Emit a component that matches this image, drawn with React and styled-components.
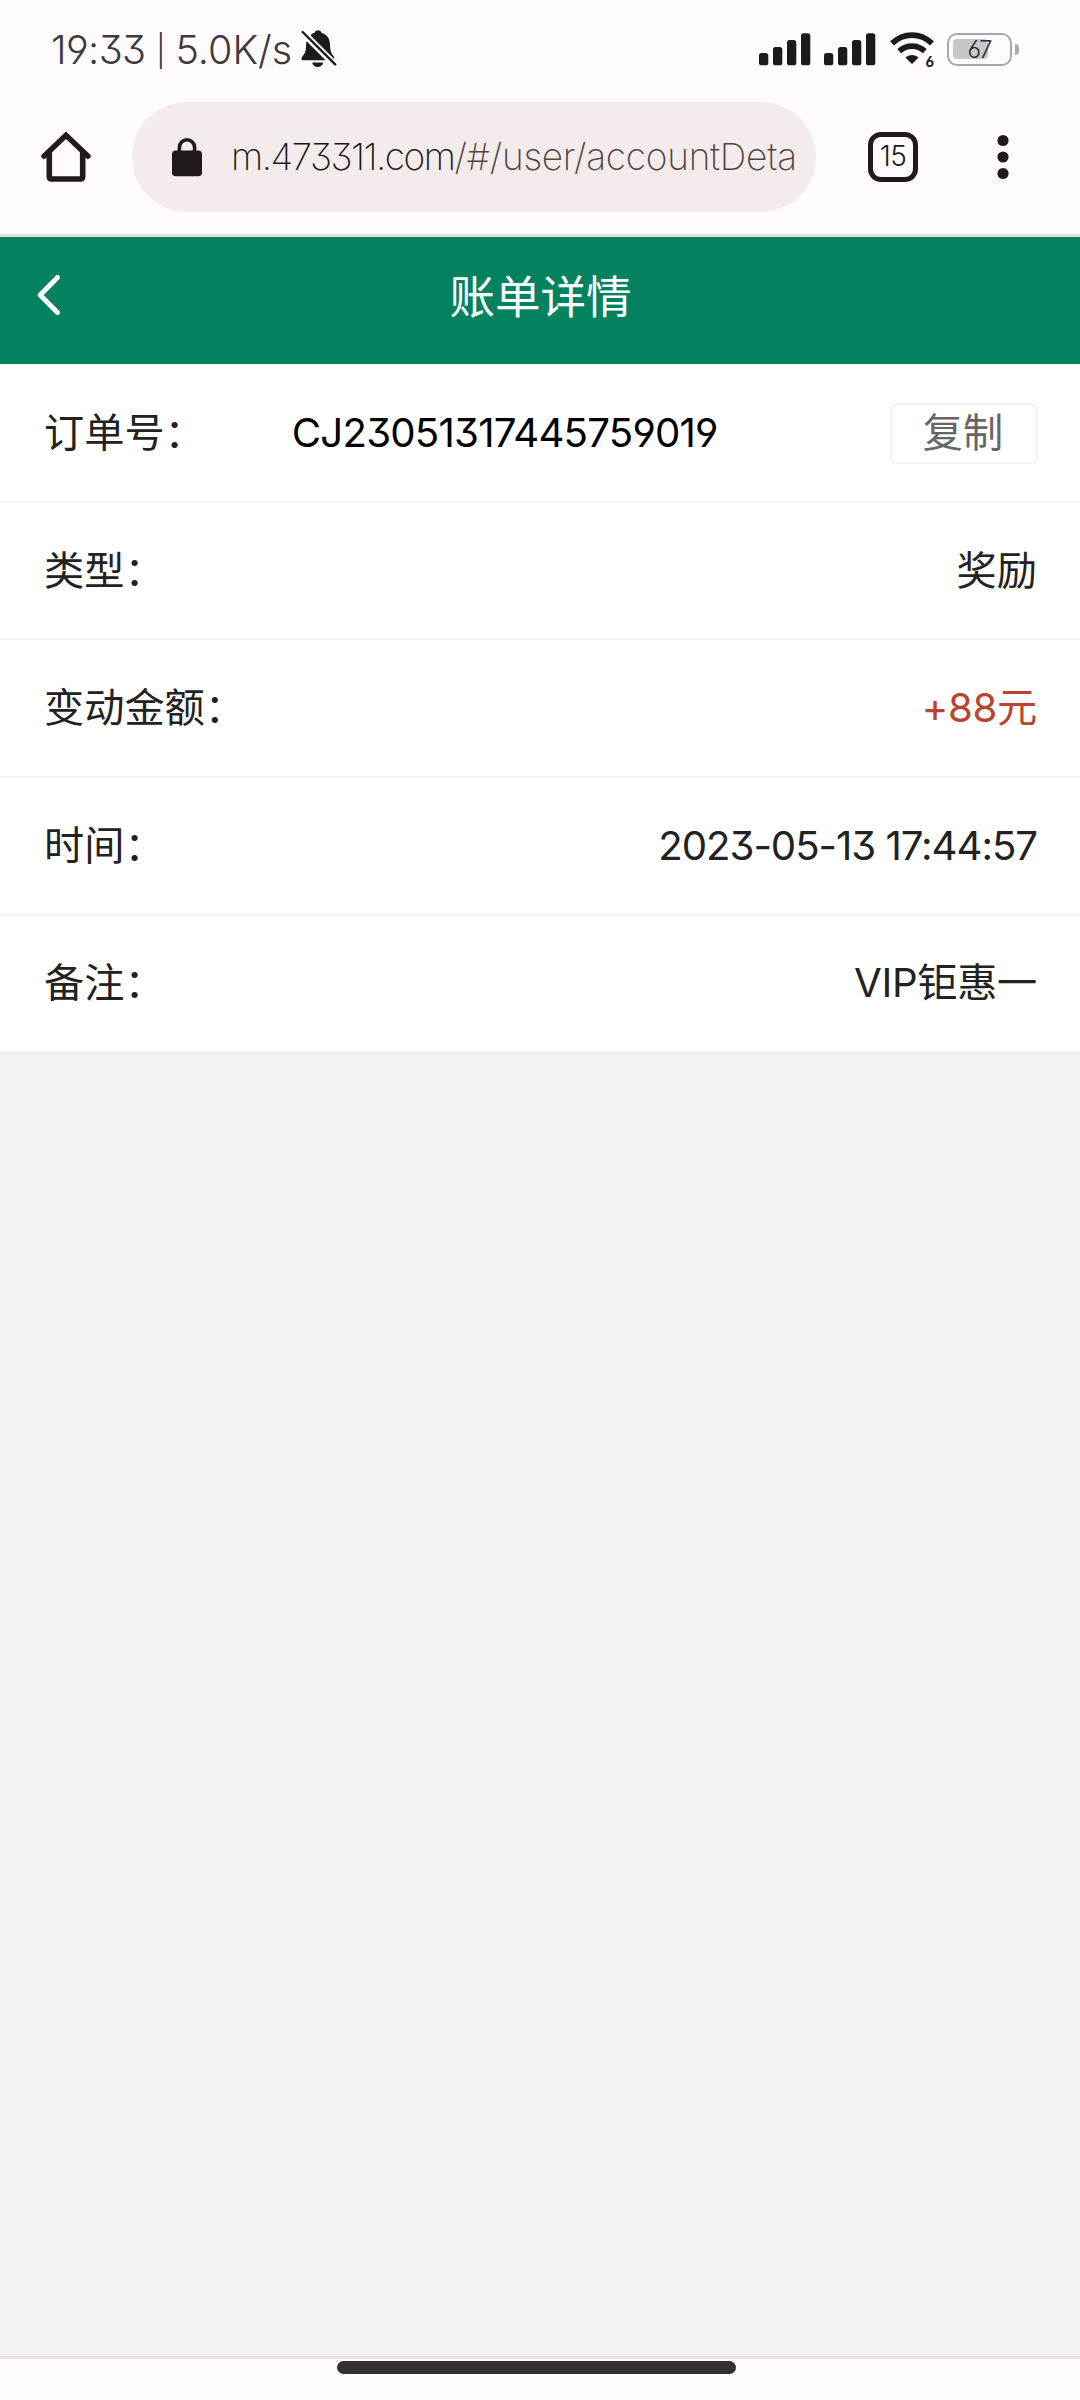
import React from "react";
import styled, { createGlobalStyle } from "styled-components";

const rows = [
  { label: "类型：", value: "奖励" },
  { label: "变动金额：", value: "+88元", $color: "#bb4430", $spacing: "-0.3px" },
  { label: "时间：", value: "2023-05-13 17:44:57", $spacing: "-1.05px" },
  { label: "备注：", value: "VIP钜惠一", $spacing: "-0.3px" },
];

const SignalIcon = () => (
  <svg width="52" height="33" viewBox="0 0 52 33" fill="#1b1b1b">
    <rect x="0" y="20" width="9.3" height="12.3" rx="2.6" />
    <rect x="14" y="14" width="9.3" height="18.3" rx="2.6" />
    <rect x="28" y="7" width="9.3" height="25.3" rx="2.6" />
    <rect x="42" y="0.2" width="9.3" height="32.1" rx="2.6" />
  </svg>
);

const WifiIcon = () => (
  <svg width="46" height="34" viewBox="0 0 46 34" fill="none" stroke="#1b1b1b">
    <path d="M3 11.4C14.6 0.4 31.4 0.4 43 11.4" strokeWidth="5.6" />
    <path d="M10.2 19.2C17.8 12.4 28.2 12.4 35.8 19.2" strokeWidth="5.6" />
    <path d="M16.4 25.6C20.2 22 25.8 22 29.6 25.6L23 32Z" fill="#1b1b1b" stroke="none" />
  </svg>
);

const MutedBellIcon = () => (
  <svg width="36" height="38" viewBox="0 0 36 38" fill="#1b1b1b">
    <path d="M9.6 5.4C10.8 3.9 12.2 3 13.8 2.6C14 1 15.4 0.2 17 0.2C18.8 0.2 20.2 1.2 20.5 2.7C25.8 4.2 28.9 8.6 29 14.4C29.1 18.6 29.6 21.4 30.8 23.8L33.4 27.6C33.7 28.3 33.3 28.7 32.4 28.2Z" />
    <path d="M5.6 11.2L24.6 30.2H2.4C0.3 30.2 -0.2 28.6 1.2 26.8C3.9 23.6 5 20.8 5 16.4C5 14.4 5.1 12.8 5.6 11.2Z" />
    <path d="M11.2 32.4H22.2C21.7 35.2 19.4 37 16.7 37C14 37 11.7 35.2 11.2 32.4Z" />
    <path d="M1.6 2L34.2 34.4" fill="none" stroke="#1b1b1b" strokeWidth="2.4" strokeLinecap="round" />
  </svg>
);

const HomeIcon = () => (
  <svg width="50" height="50" viewBox="0 0 50 50" fill="none" stroke="#201a18" strokeLinecap="round">
    <path d="M3 24.2L25 3.2L47 24.2" strokeWidth="5.4" strokeLinejoin="miter" />
    <path d="M8.3 20V44.4Q8.3 47 11 47H39Q41.7 47 41.7 44.4V20" strokeWidth="5.6" />
  </svg>
);

const LockIcon = () => (
  <svg width="30" height="39" viewBox="0 0 30 39">
    <rect x="0" y="12.6" width="30" height="25.7" rx="3.8" fill="#201a18" />
    <path d="M7.4 14V9.4a7.6 7.6 0 0 1 15.2 0V14" fill="none" stroke="#201a18" strokeWidth="3.6" />
  </svg>
);

const DotsIcon = () => (
  <svg width="12" height="46" viewBox="0 0 12 46" fill="#201a18">
    <circle cx="6" cy="6.5" r="5.6" />
    <circle cx="6" cy="23" r="5.6" />
    <circle cx="6" cy="39.5" r="5.6" />
  </svg>
);

const BackIcon = () => (
  <svg width="24" height="42" viewBox="0 0 24 42" fill="none">
    <path d="M20.4 3.4L3.2 21L20.4 38.4" stroke="#fff" strokeWidth="5" strokeLinecap="round" strokeLinejoin="round" />
  </svg>
);

const App = () => {
  return (
    <Page>
      <GlobalStyle />
      <StatusBar>
        <StatusText>
          19:33 <Pipe>|</Pipe> <Speed>5.0K/s</Speed>
        </StatusText>
        <MutedBellIcon />
        <StatusIcons>
          <SignalIcon />
          <SignalIcon />
          <Wifi>
            <WifiIcon />
            <WifiBadge>6</WifiBadge>
          </Wifi>
          <Battery>
            <BatteryLevel />
            <BatteryText>67</BatteryText>
          </Battery>
          <BatteryTip />
        </StatusIcons>
      </StatusBar>

      <Toolbar>
        <HomeIcon />
        <AddressBar>
          <LockIcon />
          <Url>
            <Host>m.473311.com</Host>/#/user/accountDeta
          </Url>
        </AddressBar>
        <TabCount>15</TabCount>
        <DotsIcon />
      </Toolbar>

      <Header>
        <BackButton aria-label="返回">
          <BackIcon />
        </BackButton>
        <Title>账单详情</Title>
      </Header>

      <Row>
        <Label>订单号：</Label>
        <OrderNumber>CJ23051317445759019</OrderNumber>
        <CopyButton>复制</CopyButton>
      </Row>
      {rows.map(({ label, value, ...style }) => (
        <Row key={label}>
          <Label>{label}</Label>
          <Value {...style}>{value}</Value>
        </Row>
      ))}

      <Blank />
      <NavBar>
        <Handle />
      </NavBar>
    </Page>
  );
};

export default App;

const GlobalStyle = createGlobalStyle`
  * {
    box-sizing: border-box;
  }

  body {
    margin: 0;
    background: #f3f3f3;
  }

  svg {
    display: block;
    flex-shrink: 0;
  }
`;

const Page = styled.div`
  width: 1080px;
  height: 2400px;
  display: flex;
  flex-direction: column;
  overflow: hidden;
  background: #f3f3f3;
  font-family: Inter, "Noto Sans CJK SC", sans-serif;
  font-feature-settings: "cv03", "cv04", "cv09";
  font-size: 40.2px;
  color: #222222;
`;

const StatusBar = styled.div`
  height: 98px;
  padding: 0 61px 0 51px;
  display: flex;
  align-items: center;
  background: #fffbff;
  flex-shrink: 0;
`;

const StatusText = styled.div`
  width: 250px;
  padding-top: 2px;
  font-size: 39.5px;
  font-weight: 300;
  letter-spacing: -0.6px;
  line-height: 48px;
  white-space: nowrap;
  color: #3c3a3d;
`;

const Pipe = styled.span`
  display: inline-block;
  width: 9px;
  font-size: 31px;
  line-height: 30px;
  text-align: center;
  vertical-align: 2px;
`;

const Speed = styled.span`
  letter-spacing: 0;
`;

const StatusIcons = styled.div`
  margin-left: auto;
  display: flex;
  align-items: center;
  gap: 13px;
`;

const Wifi = styled.div`
  position: relative;
`;

const WifiBadge = styled.span`
  position: absolute;
  right: 1px;
  bottom: -4px;
  font-size: 14px;
  font-weight: 700;
  line-height: 16px;
  color: #1b1b1b;
`;

const Battery = styled.div`
  position: relative;
  width: 65px;
  height: 33px;
  margin-left: -1px;
  padding: 4px;
  border: 2.5px solid #aaa7ab;
  border-radius: 10px;
`;

const BatteryLevel = styled.div`
  width: 35px;
  height: 20px;
  border-radius: 4px;
  background: #c9c6ca;
`;

const BatteryText = styled.span`
  position: absolute;
  inset: 0;
  text-align: center;
  font-size: 23.5px;
  font-weight: 300;
  letter-spacing: -1px;
  line-height: 29px;
  color: #2c2a2d;
`;

const BatteryTip = styled.div`
  width: 4px;
  height: 11px;
  margin-left: -10px;
  border-radius: 0 4px 4px 0;
  background: #aaa7ab;
`;

const Toolbar = styled.div`
  height: 139px;
  padding: 4px 71px 22px 41px;
  display: flex;
  align-items: center;
  background: #fffbff;
  border-bottom: 3px solid #e3dfdb;
  flex-shrink: 0;
`;

const AddressBar = styled.div`
  width: 684px;
  height: 110px;
  margin: 0 52px 0 41px;
  padding: 0 22px 0 40px;
  display: flex;
  align-items: center;
  border-radius: 55px;
  background: #f4ecec;
`;

const Url = styled.div`
  flex: 1;
  margin-left: 29px;
  overflow: hidden;
  white-space: nowrap;
  font-size: 37px;
  font-weight: 200;
  letter-spacing: -0.25px;
  line-height: 50px;
  color: #524541;
`;

const Host = styled.span`
  letter-spacing: -1.5px;
  color: #201a18;
`;

const TabCount = styled.div`
  width: 50px;
  height: 50px;
  margin-right: 79px;
  border: 5.5px solid #201a18;
  border-radius: 13px;
  text-align: center;
  font-size: 28px;
  font-weight: 300;
  letter-spacing: -0.5px;
  line-height: 39px;
  color: #201a18;
`;

const Header = styled.div`
  height: 128.3px;
  padding-bottom: 6px;
  display: flex;
  align-items: center;
  justify-content: center;
  position: relative;
  background: #02825f;
  border-bottom: 1px solid #e6f5f1;
  color: #ffffff;
  flex-shrink: 0;
`;

const BackButton = styled.button`
  position: absolute;
  left: 37px;
  top: 37px;
  padding: 0;
  border: none;
  background: transparent;
`;

const Title = styled.div`
  padding-left: 1px;
  font-size: 45.5px;
  line-height: 60px;
`;

const Row = styled.div`
  height: 137.6px;
  padding: 0 42px 0 44px;
  display: flex;
  align-items: center;
  background: #ffffff;
  border-bottom: 2px solid #f3f3f3;
  flex-shrink: 0;
`;

const Label = styled.div`
  line-height: 60px;
`;

const Value = styled.div`
  margin: 0 1px 0 auto;
  line-height: 60px;
  letter-spacing: ${({ $spacing }) => $spacing || "0"};
  color: ${({ $color }) => $color || "#222222"};
`;

const OrderNumber = styled.div`
  margin-left: 87px;
  line-height: 60px;
  letter-spacing: -0.8px;
  color: #000000;
`;

const CopyButton = styled.button`
  width: 148px;
  height: 61px;
  margin-left: auto;
  padding: 0 2px 0 0;
  border: 2px solid #f3f3f3;
  border-radius: 7px;
  background: #ffffff;
  font-family: inherit;
  font-size: 40.2px;
  line-height: 56px;
  color: #666666;
`;

const Blank = styled.div`
  flex: 1;
`;

const NavBar = styled.div`
  height: 44px;
  padding: 2px 0 0 337px;
  background: #fffbff;
  border-top: 3px solid #eedfdc;
  flex-shrink: 0;
`;

const Handle = styled.div`
  width: 399px;
  height: 13px;
  border-radius: 7px;
  background: #323032;
`;
